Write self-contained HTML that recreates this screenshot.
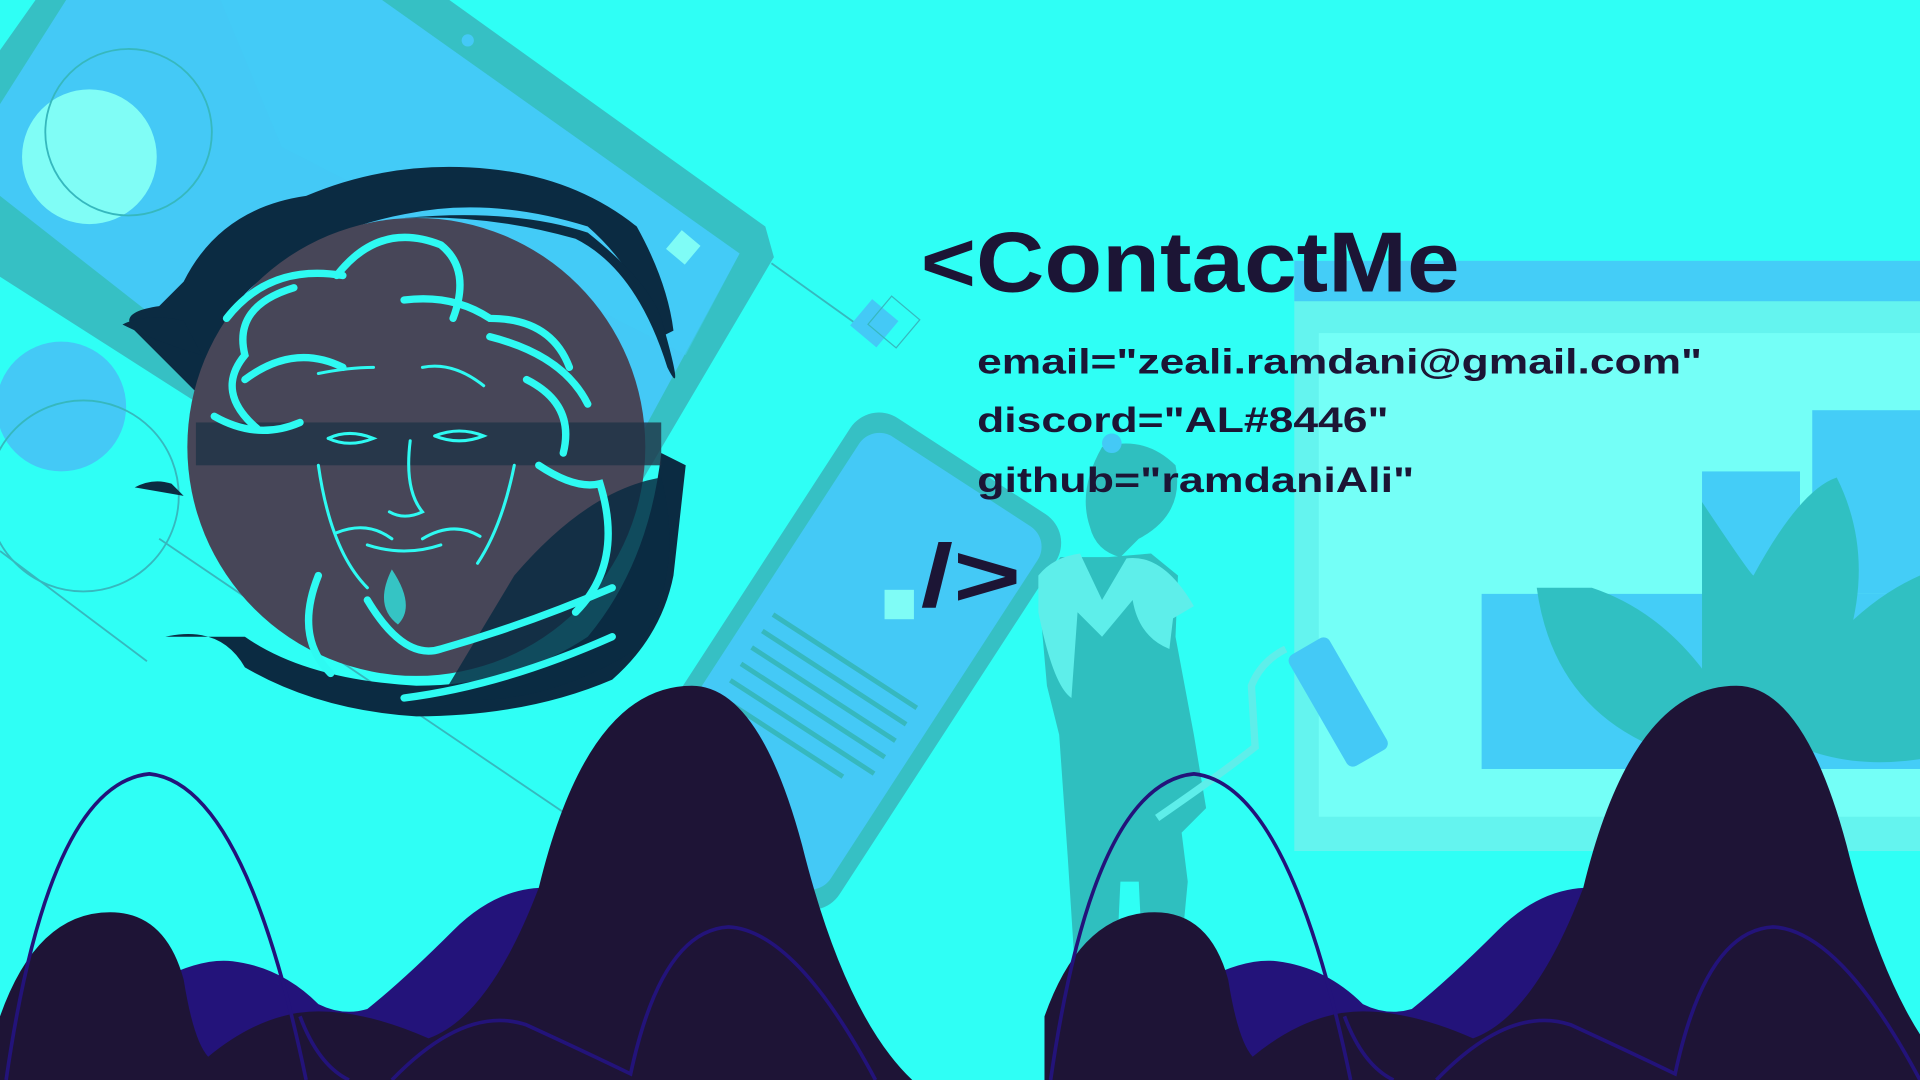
<!DOCTYPE html>
<html><head><meta charset="utf-8"><style>
html,body{margin:0;padding:0;width:1920px;height:1080px;overflow:hidden;background:#2ffff5}
svg{display:block}
</style></head><body>
<svg width="1920" height="1080" viewBox="0 0 1568 882" preserveAspectRatio="none" xmlns="http://www.w3.org/2000/svg">
<rect width="1568" height="882" fill="#2ffff5"/>
<!-- tablet top-left -->
<polygon points="29,0 367,0 625,185 632,210 520,400 158,327 0,226 0,41" fill="#36c0c4"/>
<polygon points="54,0 312,0 604,207 510,380 125,258 0,160 0,85" fill="#44c9f6"/>
<polygon points="180,0 312,0 604,207 560,290 230,120" fill="#42cdf7" opacity=".5"/>
<circle cx="382" cy="33" r="5" fill="#44c9f6"/>
<circle cx="73" cy="128" r="55" fill="#80fdf6"/>
<circle cx="105" cy="108" r="68" fill="none" stroke="#36b8be" stroke-width="1.5"/>
<circle cx="50" cy="332" r="53" fill="#44c9f6"/>
<circle cx="68" cy="405" r="78" fill="none" stroke="#36b8be" stroke-width="1.5"/>
<line x1="630" y1="215" x2="700" y2="265" stroke="#36b8be" stroke-width="1.5"/>
<line x1="130" y1="440" x2="470" y2="670" stroke="#36b8be" stroke-width="1.5"/>
<line x1="0" y1="450" x2="120" y2="540" stroke="#36b8be" stroke-width="1.5"/>
<rect x="700" y="250" width="28" height="28" fill="#44c9f6" transform="rotate(40 714 264)"/>
<rect x="715" y="248" width="30" height="30" fill="none" stroke="#36b8be" transform="rotate(40 730 263)"/>
<rect x="548" y="192" width="20" height="20" fill="#7ffcf6" transform="rotate(40 558 202)"/>
<!-- phone -->
<g transform="rotate(33 690 540)">
<rect x="590" y="350" width="200" height="380" rx="28" fill="#36c0c4"/>
<rect x="603" y="365" width="174" height="350" rx="20" fill="#44c9f6"/>
<rect x="690" y="465" width="24" height="24" fill="#7ffcf6" transform="rotate(-33 702 477)"/>
<g stroke="#36b8be" stroke-width="4">
<line x1="620" y1="540" x2="760" y2="540"/><line x1="620" y1="556" x2="760" y2="556"/>
<line x1="620" y1="572" x2="760" y2="572"/><line x1="620" y1="588" x2="760" y2="588"/>
<line x1="620" y1="604" x2="760" y2="604"/><line x1="620" y1="620" x2="740" y2="620"/>
</g></g>
<!-- right panel -->
<rect x="1057" y="213" width="511" height="482" fill="#64f4ef"/>
<rect x="1057" y="213" width="511" height="33" fill="#44cdf7"/>
<rect x="1077" y="272" width="491" height="395" fill="#74fff7"/>
<rect x="1210" y="485" width="358" height="143" fill="#44cdf7"/>
<rect x="1390" y="385" width="80" height="100" fill="#44cdf7"/>
<rect x="1480" y="335" width="88" height="150" fill="#44cdf7"/>
<path d="M1255,480 Q1270,590 1380,620 L1400,560 Q1360,500 1300,480Z" fill="#30c0c2"/>
<path d="M1390,410 Q1430,470 1432,470 Q1470,400 1500,390 Q1530,450 1510,520 Q1470,560 1450,590 Q1500,500 1568,470 L1568,620 Q1500,630 1450,600 L1390,560Z" fill="#30c0c2"/>
<!-- person -->
<g fill="#2fbfbf">
<path d="M900,365 Q935,355 960,380 Q968,420 930,440 L915,455 Q895,450 890,430 Q880,400 900,365Z"/>
<path d="M866,455 L905,455 L940,452 L962,470 L960,520 L975,600 L985,660 L965,680 L970,720 L960,825 L935,825 L930,720 L915,720 L910,825 L880,825 L872,700 L865,600 L855,560 L848,480Z"/>
</g>
<path d="M848,470 Q860,455 882,452 L900,490 L920,456 Q950,452 975,495 L958,505 L955,530 Q930,520 925,490 L900,520 L880,500 L875,570 Q860,560 848,500Z" fill="#5eeeea"/>
<circle cx="908" cy="362" r="8" fill="#44c9f6"/>
<g transform="rotate(-30 1095 575)"><rect x="1075" y="520" width="38" height="105" rx="6" fill="#44c9f6"/></g>
<path d="M1050,530 Q1030,540 1022,560 L1025,610 Q1000,630 945,668" fill="none" stroke="#5eeeea" stroke-width="6"/>
<!-- portrait -->
<g fill="#0b2b42">
<path d="M150,230 Q180,170 250,160 Q320,130 400,138 Q470,145 520,185 Q545,230 550,270 L540,275 Q520,220 480,185 Q400,160 330,175 Q250,190 200,240 Q170,280 160,320 L110,270 Q95,255 130,250Z"/>
<path d="M140,395 Q125,390 110,398 L150,405Z"/>
<path d="M135,520 Q180,510 200,545 Q260,580 340,585 Q430,585 500,555 Q540,520 550,470 L560,380 L540,370 Q530,460 480,520 Q420,560 340,560 Q250,555 200,520Z"/>
</g>
<circle cx="340" cy="365" r="187" fill="#474658"/>
<path d="M330,178 Q420,170 480,190 Q530,230 540,260 Q560,330 545,300 Q520,220 470,195 Q400,175 330,178Z" fill="#0b2b42"/>
<rect x="160" y="345" width="380" height="35" fill="#1f3347" opacity=".8"/>
<path d="M420,470 Q480,400 540,390 Q560,470 520,530 Q440,580 360,570Z" fill="#0b2b42" opacity=".85"/>
<path d="M100,265 Q120,255 150,262 L165,290 Q130,280 100,265Z" fill="#0b2b42"/>
<g fill="none" stroke="#2efaf2" stroke-width="6" stroke-linecap="round">
<path d="M185,260 Q220,215 280,225"/><path d="M240,235 Q190,250 200,290 Q175,320 210,350"/>
<path d="M275,225 Q310,180 360,200 Q385,220 370,260"/>
<path d="M330,245 Q370,240 400,260 Q450,260 465,300"/>
<path d="M200,310 Q240,280 280,300"/><path d="M175,340 Q210,360 245,345"/>
<path d="M400,275 Q460,290 480,330"/><path d="M430,310 Q470,330 460,370"/>
<path d="M260,470 Q240,520 270,550"/><path d="M300,490 Q330,540 360,530 Q430,510 500,480"/>
<path d="M330,570 Q410,560 500,520"/><path d="M440,380 Q470,400 490,395 Q510,460 470,500"/>
</g>
<g fill="none" stroke="#2efaf2" stroke-width="2.5" stroke-linecap="round">
<path d="M268,358 Q285,350 305,358 Q285,366 268,358"/><path d="M355,356 Q375,348 395,356 Q375,364 355,356"/>
<path d="M335,360 Q330,400 345,418 Q330,425 318,418"/>
<path d="M275,435 Q300,425 320,440 M345,440 Q370,425 392,438"/>
<path d="M300,445 Q330,455 360,445"/><path d="M260,380 Q270,450 300,480"/>
<path d="M420,380 Q410,430 390,460"/><path d="M260,305 Q285,300 305,300 M345,300 Q370,295 395,315"/>
</g>
<path d="M320,465 Q340,495 325,510 Q305,495 320,465Z" fill="#2efaf2" opacity=".7"/>
<!-- text -->
<g fill="#1c1535" font-family="'Liberation Sans',sans-serif" font-weight="bold">
<text x="752" y="238" font-size="70" textLength="440" lengthAdjust="spacingAndGlyphs">&lt;ContactMe</text>
<text x="798" y="305" font-size="29" textLength="592" lengthAdjust="spacingAndGlyphs">email="zeali.ramdani@gmail.com"</text>
<text x="798" y="353" font-size="29" textLength="336" lengthAdjust="spacingAndGlyphs">discord="AL#8446"</text>
<text x="798" y="402" font-size="29" textLength="357" lengthAdjust="spacingAndGlyphs">github="ramdaniAli"</text>
<text x="752" y="495" font-size="72" textLength="82" lengthAdjust="spacingAndGlyphs">/&gt;</text>
</g>
<!-- waves -->
<g id="w">
<path d="M130,882 L130,800 Q165,782 190,785 Q230,790 260,820 Q280,830 300,824 Q330,800 370,760 Q405,725 445,725 L460,882Z" fill="#23137a"/>
<path d="M0,882 L0,830 Q30,745 90,745 Q135,745 150,800 Q158,850 170,863 Q215,826 260,826 Q300,826 350,848 Q400,830 440,725 Q480,560 565,560 Q620,560 655,690 Q690,830 745,882Z" fill="#1e1436"/>
<path d="M5,882 Q40,640 122,632 Q200,640 250,882" fill="none" stroke="#23137a" stroke-width="3"/>
<path d="M245,830 Q260,870 285,882 M320,882 Q380,820 430,837 Q480,860 515,877 Q540,760 595,757 Q650,760 715,882" fill="none" stroke="#23137a" stroke-width="3"/>
</g>
<use href="#w" x="853"/>
</svg>
</body></html>
